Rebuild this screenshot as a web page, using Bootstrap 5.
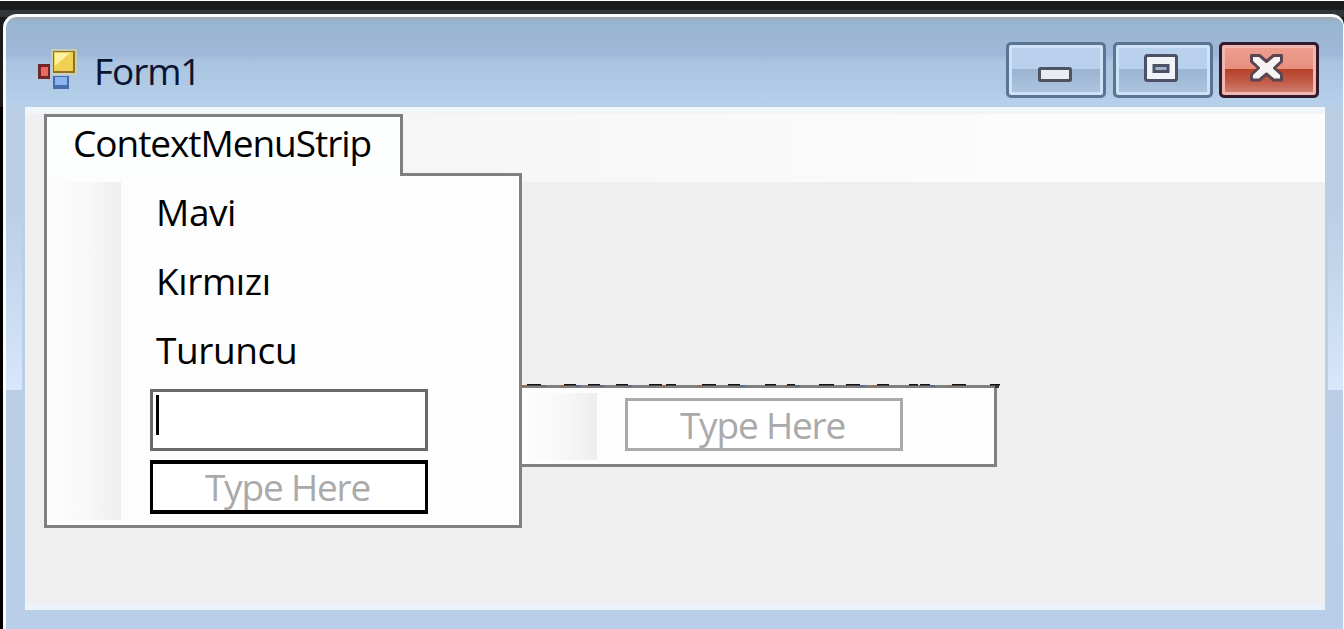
<!DOCTYPE html>
<html lang="tr">
<head>
<meta charset="utf-8">
<meta name="viewport" content="width=device-width, initial-scale=1">
<title>Form1</title>
<link href="https://cdn.jsdelivr.net/npm/bootstrap@5.3.0/dist/css/bootstrap.min.css" rel="stylesheet">
<style>
  body { height: 629px; padding: 14px 0 0 3px; font-family: "Open Sans", "Noto Sans", sans-serif; font-size: 37px; line-height: 1; color: #000;
    background: linear-gradient(#fff 0 1px, #1b1c1d 1px 10px, #343536 10px 17px, #1b1b1b 17px 107px, #000 107px); }
  .window { height: 615px; border: 3px solid #fafdff; border-right-width: 1px; border-bottom: 0; border-radius: 14px 12px 0 0;
    background: linear-gradient(#a2abb8 0 2px, #98b5cf 4px, #a0b8d8 38px, #aac3e0 44px, #b5d0ea 86px, #bacfe4 92px, #b9cee8 100%); }
  .titlebar { height: 90px; padding: 0 24px 0 30px; }
  .caption-text { color: #0b1430; margin-left: 16px; line-height: 108px; letter-spacing: -1.1px; }
  .cmd { width: 100px; height: 56px; padding: 0; border: 3px solid #5b7494; border-radius: 5px; box-shadow: inset 0 0 0 3px #cfe3f8;
    background: linear-gradient(#b9d1ed 0 24px, #9bb4d1 24px, #aec6e0 100%); }
  .cmd-close { margin-left: -1px; border-color: #33192a; box-shadow: inset 0 0 0 3px #f0b7b0;
    background: linear-gradient(#ee9f92, #e78f7e 24px, #b64028 24px, #c25f4c 38px, #d28779 100%); }
  .edge { width: 19px; height: 503px; }
  .edge::before { content: ""; display: block; margin-top: 100px; height: 183px; width: 16px; background: linear-gradient(#bccfe800, #c9dcf0 55%, #d9e7fb); }
  .edge-end { width: 18px; }
  .edge-end::before { margin-left: 3px; width: 15px; }
  .client { height: 503px; padding: 7px 0 0 19px; border-bottom: 7px solid #ebf2f9;
    background: linear-gradient(#f0f5fa 0 7px, #0000 7px), linear-gradient(90deg, #f0f0f2, #f6f6f6 30%, #fcfcfd 80%) 0 0 / 100% 75px no-repeat, #efefef; }
  .tab-head { width: 359px; height: 62px; margin-bottom: -3px; border: 3px solid #808080; border-bottom: 0; background: #fdfefe; z-index: 2; padding-left: 26px; line-height: 52px; letter-spacing: -1.04px; }
  .menu-box { width: 478px; height: 355px; border: 3px solid #808080; background: #fdfdfd; }
  .gutter { width: 74px; margin: 6px 0 5px; background: linear-gradient(90deg, #fdfdfd, #f8f8f8 55%, #f0f0f0 90%, #eeeeee); }
  .items { padding: 2px 0 0 29px; }
  .entry { height: 69px; line-height: 67px; padding-left: 6px; letter-spacing: -.4px; }
  .editor { width: 278px; height: 62px; margin-top: 4px; border: 3px solid #696969; background: #fff; padding: 3px; }
  .caret-bar { width: 3px; height: 40px; background: #000; }
  .hint { width: 278px; height: 54px; border: 4px solid #000; border-width: 4px 3px; background: #fff; color: #aaa; line-height: 46px; padding-right: 3px; letter-spacing: -1.2px; }
  .hint-faint { border: 3px solid #aaa; height: 53px; margin-top: 10px; line-height: 47px; }
  .submenu { width: 475px; height: 82px; margin-top: 271px; border: 3px solid #808080; border-left: 0; background: #fdfdfd; }
  .submenu .gutter { width: 75px; margin: 5px 28px 4px 0; }
  .clipped { left: 0; top: -4px; }
</style>
</head>
<body class="overflow-hidden">
<main class="window overflow-hidden">
  <header class="titlebar d-flex">
    <svg class="flex-shrink-0" style="margin-top:31px" width="42" height="44" viewBox="36 48 42 44">
      <rect x="51" y="49" width="26" height="26" fill="#d7d3a2" opacity=".7"/>
      <rect x="53" y="51" width="22" height="22" fill="#8b7423"/><rect x="54" y="52" width="19" height="19" fill="#efd052"/><path d="M55 53h15l-15 13z" fill="#fff0a2"/>
      <rect x="38" y="64" width="12" height="15" fill="#742524"/><rect x="41" y="67" width="7" height="9" fill="#e66a60"/>
      <rect x="53" y="76" width="16" height="13" fill="#466da9"/><rect x="55" y="77" width="12" height="8" fill="#8bb5ed"/>
    </svg>
    <span class="caption-text">Form1</span>
    <div class="d-flex ms-auto" style="margin-top:25px;gap:7px">
      <button class="cmd" aria-label="Minimize"><svg class="d-block" width="94" height="50" viewBox="1009 45 94 50"><rect x="1039.5" y="68.5" width="31" height="12" rx="1" fill="#e9edf0" stroke="#4d5360" stroke-width="3"/></svg></button>
      <button class="cmd" aria-label="Maximize"><svg class="d-block" width="94" height="50" viewBox="1116 45 94 50"><rect x="1145.5" y="55.5" width="31" height="25" rx="2" fill="#f1f3f8" stroke="#4c5266" stroke-width="3"/><rect x="1154" y="65.5" width="14" height="6" fill="#9eb0cc" stroke="#4c5266" stroke-width="3"/></svg></button>
      <button class="cmd cmd-close" aria-label="Close"><svg class="d-block" width="94" height="50" viewBox="1222 45 94 50"><path d="M1251.500 55.500h8l7 6 7-6h8v6l-7 6.500 7 6.500v5.500h-8l-7-6-7 6h-8V74.500l7-6.500-7-6.500z" fill="#f6f3f4" stroke="#5b4550" stroke-width="3" stroke-linejoin="round"/></svg></button>
    </div>
  </header>
  <div class="d-flex">
    <div class="edge flex-shrink-0 overflow-hidden"></div>
    <section class="client flex-grow-1 d-flex">
      <div class="flex-shrink-0">
        <div class="tab-head position-relative">ContextMenuStrip</div>
        <div class="menu-box d-flex">
          <div class="gutter"></div>
          <div class="items">
            <div class="entry">Mavi</div>
            <div class="entry">Kırmızı</div>
            <div class="entry">Turuncu</div>
            <div class="editor"><div class="caret-bar"></div></div>
            <div class="hint text-center" style="margin-top:9px">Type Here</div>
          </div>
        </div>
      </div>
      <div class="submenu d-flex position-relative">
        <svg class="clipped position-absolute" width="480" height="5" viewBox="522 384 480 5">
          <path d="M527 384.500h14M564 384.500h12M588 384.500h12M616 384.500h12M649 384.500h13M666 384.500h10M702 384.500h14M728 384.500h12M765 384.500h11M787 384.500h8M819 384.500h15M846 384.500h14M877 384.500h12M909 384.500h9M920 384.500h10M952 384.500h14M990 384.500h10" stroke="#111" stroke-width="2"/>
          <path d="M541 386h5M576 386h4M600 386h4M628 386h4M740 386h5M795 386h5M860 386h5M930 386h5" stroke="#58708d" stroke-width="2"/>
          <path d="M522 386h5M560 386h4M662 386h4M697 386h5M783 386h4M872 386h5M948 386h4" stroke="#94705b" stroke-width="2"/>
          <path d="M995 386.500h4" stroke="#333" stroke-width="3"/>
        </svg>
        <div class="gutter"></div>
        <div class="hint hint-faint text-center">Type Here</div>
      </div>
    </section>
    <div class="edge edge-end flex-shrink-0 overflow-hidden"></div>
  </div>
</main>
<script src="https://cdn.jsdelivr.net/npm/bootstrap@5.3.0/dist/js/bootstrap.bundle.min.js"></script>
</body>
</html>
